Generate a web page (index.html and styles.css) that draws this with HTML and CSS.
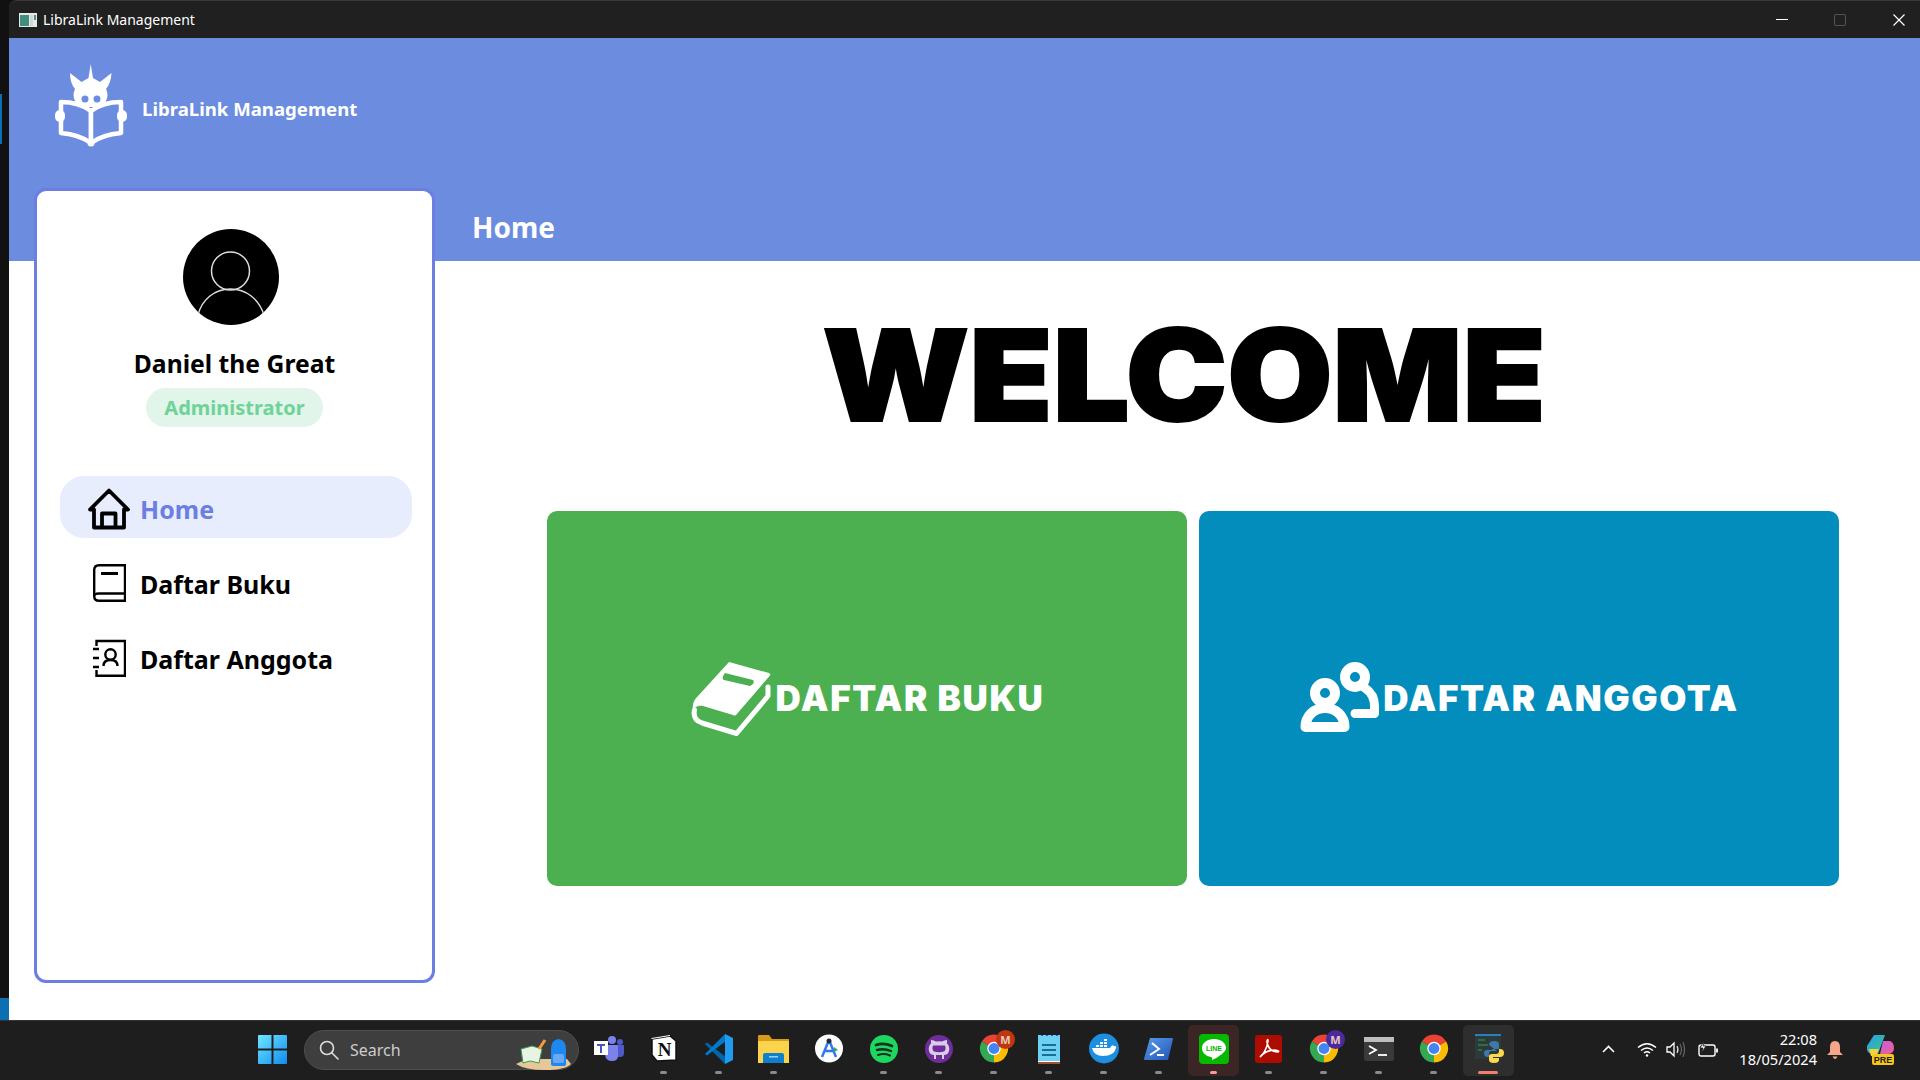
FILE: index.html
```html
<!DOCTYPE html>
<html lang="en">
<head>
<meta charset="utf-8">
<title>LibraLink Management</title>
<link rel="stylesheet" href="styles.css">
</head>
<body>
<div class="desktop">
  <div class="rail"><span class="rail-mark"></span><span class="rail-end"></span></div>
  <div class="window">
    <div class="titlebar">
      <svg class="app-icon" width="18" height="14" viewBox="0 0 18 14"><rect width="18" height="14" fill="#e8e8e8"/><rect x="1" y="2" width="9" height="11" fill="#3f8f7c"/><rect x="11" y="2" width="3" height="11" fill="#cfd8d8"/><rect x="15" y="2" width="2" height="5" fill="#4d8f80"/></svg>
      <span class="title-text">LibraLink Management</span>
      <div class="win-controls">
        <span class="win-min"></span>
        <span class="win-max"></span>
        <svg width="12" height="12" viewBox="0 0 12 12"><path d="M.5.5l11 11M11.5.5l-11 11" stroke="#fff" stroke-width="1.2"/></svg>
      </div>
    </div>
    <div class="app">
      <div class="banner"></div>
      <div class="brand">
        <svg class="logo" width="72" height="84" viewBox="0 0 72 84">
          <g fill="#6c8cdf" stroke="#fff" stroke-width="4.500" stroke-linejoin="round">
            <path d="M6 39C17 39 28 42 36 48V80C28 74 17 71 6 70Z"/>
            <path d="M66 39C55 39 44 42 36 48V80C44 74 55 71 66 70Z"/>
          </g>
          <path fill="#fff" d="M35.700 1L38 15L45 19L56.500 10Q56 20 51 26Q54 32 51 38L47 44H24.500L20 38Q17 32 20 26Q15 20 15 10L26.500 19L33.500 15Z"/>
          <circle cx="30" cy="36" r="3.500" fill="#6c8cdf"/><circle cx="42" cy="36" r="3.500" fill="#6c8cdf"/>
          <rect x="0" y="47" width="10" height="12" rx="5" fill="#fff"/><rect x="62" y="47" width="10" height="12" rx="5" fill="#fff"/>
          <circle cx="36" cy="80" r="3.500" fill="#fff"/>
        </svg>
        <span class="brand-name">LibraLink Management</span>
      </div>
      <aside class="sidebar">
        <svg class="avatar" width="96" height="96" viewBox="0 0 96 96">
          <defs><clipPath id="avclip"><circle cx="48" cy="48" r="48"/></clipPath></defs>
          <circle cx="48" cy="48" r="48"/>
          <circle cx="47.500" cy="42" r="19" fill="none" stroke="#ddd" stroke-width="1.500"/>
          <path clip-path="url(#avclip)" d="M15 86C19 70 32 60 47.500 60S76 70 81 86" fill="none" stroke="#ddd" stroke-width="1.500"/>
        </svg>
        <div class="user-name">Daniel the Great</div>
        <div class="role">Administrator</div>
        <nav class="nav">
          <a class="nav-item nav-active">
            <span class="nav-icon"><svg width="42" height="42" viewBox="0 0 42 42" fill="none" stroke="#000" stroke-width="3.800" stroke-linejoin="round"><path d="M2 21.500L21 2.500L40 21.500H36V39.500H6V21.500Z"/><path d="M14 39V25.500H27.500V39"/></svg></span>
            <span>Home</span>
          </a>
          <a class="nav-item">
            <span class="nav-icon"><svg width="33" height="38" viewBox="0 0 33 38" fill="none" stroke="#000" stroke-width="2.400"><path d="M32 1.200H6Q1.200 1.200 1.200 6V32Q1.200 36.800 6 36.800H32Z"/><path d="M1.200 32Q1.200 29.500 6 29.500H32"/><path d="M8 9.500H25" stroke-width="3"/></svg></span>
            <span>Daftar Buku</span>
          </a>
          <a class="nav-item">
            <span class="nav-icon"><svg width="33" height="38" viewBox="0 0 33 38" fill="none" stroke="#000" stroke-width="2.400"><path d="M3.500 7V2H32V36.800H3.500V31"/><path d="M0 10H6M0 19H6M0 28H6" stroke-width="2.600"/><circle cx="17.500" cy="15.500" r="5.200"/><path d="M10.500 27C10.500 23 13.500 21 17.500 21S24.500 23 24.500 27"/></svg></span>
            <span>Daftar Anggota</span>
          </a>
        </nav>
      </aside>
      <div class="page-title">Home</div>
      <main class="main">
        <h1 class="welcome"><span class="welcome-text">WELCOME</span></h1>
        <div class="cards">
          <a class="card card-green">
            <svg width="84" height="78" viewBox="0 0 84 78">
              <path fill="#fff" d="M39 2L79 13Q81 14 80 15.500L46 55Q45 56 43 55L13 46C8 45 4 47 3 52C2 44 4 40 8 36Z"/>
              <path fill="none" stroke="#fff" stroke-width="5" stroke-linecap="round" stroke-linejoin="round" d="M4.500 50C3 57 6 61 12 63L46.500 73.500L78 36V27"/>
              <path fill="#4cb050" d="M35 13L63 20Q64.500 21 63 24L60 26L34 20Q32 19 33 16Z"/>
            </svg>
            <span class="card-text">DAFTAR BUKU</span>
          </a>
          <a class="card card-blue">
            <svg width="82" height="75" viewBox="0 0 82 75" fill="none" stroke="#fff" stroke-linejoin="round" stroke-linecap="round">
              <circle cx="26" cy="32" r="10" stroke-width="10"/>
              <path stroke-width="10" d="M6.500 66C6.500 55 15 47 26 47S45.500 55 45.500 66Z"/>
              <circle cx="56" cy="16" r="10" stroke-width="10"/>
              <path stroke-width="9" d="M66 27C72 31 75.500 38 75.500 45V52.500H56"/>
            </svg>
            <span class="card-text">DAFTAR ANGGOTA</span>
          </a>
        </div>
      </main>
    </div>
  </div>
</div>
<footer class="taskbar">
  <span class="start">
    <svg width="29" height="29" viewBox="0 0 29 29"><defs><linearGradient id="win" x1="0" y1="0" x2="1" y2="1"><stop offset="0" stop-color="#6fe6ff"/><stop offset="1" stop-color="#0f8cf0"/></linearGradient></defs><path fill="url(#win)" d="M0 1a1 1 0 0 1 1-1H13.500V13.500H0ZM15.500 0H28a1 1 0 0 1 1 1V13.500H15.500ZM0 15.500H13.500V29H1a1 1 0 0 1-1-1ZM15.500 15.500H29V28a1 1 0 0 1-1 1H15.500Z"/></svg>
  </span>
  <div class="search">
    <svg width="20" height="20" viewBox="0 0 20 20" fill="none" stroke="#ddd" stroke-width="1.600"><circle cx="8" cy="8" r="6.500"/><path d="M13 13l6 6" stroke-linecap="round"/></svg>
    <span class="search-text">Search</span>
    <svg class="search-art" width="56" height="34" viewBox="0 0 56 34"><path fill="#e5c79a" d="M1 27L12 22H52L56 27Q50 33 30 33T1 27Z"/><path fill="#e9f3e4" stroke="#3f9a4f" d="M6 12L17 9L27 12L24 26L15 24L8 26Z"/><path d="M24 12L30 3" stroke="#f29a3c" stroke-width="3"/><path fill="#1e88f0" d="M36 12Q36 3 43.500 2Q51 3 51 12V27Q51 29 48 29H39Q36 29 36 27Z"/><rect x="38" y="17" width="11" height="9" rx="2" fill="#6aa8f8"/></svg>
  </div>
  <div class="task-icons">
    <span class="tb"><svg width="30" height="27" viewBox="0 0 30 27"><circle cx="18" cy="5" r="4" fill="#7b83eb"/><circle cx="26" cy="7" r="3" fill="#5059c9"/><path fill="#5059c9" d="M21 10H30V18Q30 22 26 22H21Z"/><path fill="#7b83eb" d="M11 10H24V21Q24 26 18 26Q12 26 11 20Z"/><rect y="6" width="14" height="14" fill="#fff"/><path fill="#4b53bc" d="M3 9H11V11H8V18H6V11H3Z"/></svg></span>
    <span class="tb tb-on"><svg width="26" height="27" viewBox="0 0 26 27"><path fill="#fff" stroke="#111" stroke-width="1.500" d="M1 4L19 1L25 6V25L6 26L1 20Z"/><path fill="none" stroke="#fff" d="M.5 3.500L19 .5"/><text x="13.500" y="21" class="notion-n">N</text></svg></span>
    <span class="tb tb-on"><svg width="30" height="32" viewBox="0 0 30 32"><path fill="#0065a9" d="M1 11L3 9.500L22 24V28L21 31Z"/><path fill="#007acc" d="M1 21L3 22.500L22 8V4L21 1Z"/><path fill="#1f9cf0" d="M21 1L29 5V27L21 31Z"/></svg></span>
    <span class="tb tb-on"><svg width="31" height="30" viewBox="0 0 31 30"><path fill="#d99a1c" d="M0 2Q0 1 1 1H11L14 5H31V12H0Z"/><path fill="#fcd34d" d="M0 7H31V29H0Z"/><path fill="#0f7fd0" d="M5 21Q5 19 7 19H24Q26 19 26 21V29H5Z"/><rect x="11" y="22" width="9" height="1.500" fill="#9ed0f5"/></svg></span>
    <span class="tb"><svg width="30" height="31" viewBox="0 0 30 31"><circle cx="15" cy="15.500" r="14" fill="#fff"/><path fill="none" stroke="#2f78ef" stroke-width="2.500" d="M15 7L8 24M15 7L22 24M10 18H20"/><circle cx="15" cy="8" r="2.500" fill="#1f2a44"/><path d="M20 14l4 3-4 2z" fill="#3ba55c"/></svg></span>
    <span class="tb tb-on"><svg width="28" height="30" viewBox="0 0 28 30"><circle cx="14" cy="15" r="14" fill="#1ed760"/><g fill="none" stroke="#14301e" stroke-linecap="round"><path stroke-width="2.800" d="M6 11Q14 8.500 22 12"/><path stroke-width="2.400" d="M7 16Q14 14 21 17"/><path stroke-width="2" d="M8 21Q14 19 20 21.500"/></g></svg></span>
    <span class="tb tb-on"><svg width="28" height="30" viewBox="0 0 28 30"><circle cx="14" cy="15" r="14" fill="#6e2d9a"/><path fill="#d9cde6" d="M9 25V21Q5 21 4 17Q3 12 6 9.500V6Q9 6 11 7.500Q14 7 17 7.500Q19 6 22 6V9.500Q25 12 24 17Q23 21 19 21V25H17V21Q14 21 11 21V25Z"/><path fill="#6e2d9a" d="M8 11.500H20Q21.500 15 19 17.500Q14 19 9 17.500Q6.500 15 8 11.500Z"/></svg></span>
    <span class="tb tb-on tb-badged"><svg width="30" height="31" viewBox="0 0 32 32"><path fill="#ea4335" d="M16 16L3 8.500A15 15 0 0 1 29 8.500Z"/><path fill="#fbbc04" d="M16 16L29 8.500A15 15 0 0 1 16 31Z"/><path fill="#34a853" d="M16 16L16 31A15 15 0 0 1 3 8.500Z"/><circle cx="16" cy="16" r="7.200" fill="#fff"/><circle cx="16" cy="16" r="5.800" fill="#4285f4"/></svg><svg class="badge" width="19" height="19" viewBox="0 0 19 19"><circle cx="9.500" cy="9.500" r="9.500" fill="#c0360f"/><text x="9.500" y="13.500" class="badge-m">M</text></svg></span>
    <span class="tb tb-on"><svg width="22" height="32" viewBox="0 0 22 32"><path fill="#6dd0f4" d="M0 2H22V28H0Z"/><path fill="#a4532a" d="M0 28H22V31H0Z"/><path fill="#fff" d="M0 28H22V29H0Z"/><path fill="#17708f" d="M4 11H18V13H4ZM4 16H18V18H4ZM4 21H18V23H4Z"/><path fill="#117" d="M3 1h2v2H3zM8 1h2v2H8zM13 1h2v2h-2zM18 1h2v2h-2z" opacity=".6"/></svg></span>
    <span class="tb tb-on"><svg width="30" height="31" viewBox="0 0 30 31"><circle cx="15" cy="15.500" r="15" fill="#1d8fe1"/><path fill="#fff" d="M3 15H21Q23 11 25 13Q28 13 27 15Q25 23 14 23Q5 23 3 15Z"/><path fill="#fff" d="M7 12h3v2H7zM11 12h3v2h-3zM15 12h3v2h-3zM11 9h3v2h-3zM15 9h3v2h-3zM15 6h3v2h-3z"/></svg></span>
    <span class="tb tb-on"><svg width="29" height="24" viewBox="0 0 29 24"><defs><linearGradient id="ps" x1="0" y1="0" x2="1" y2="1"><stop offset="0" stop-color="#5b9bea"/><stop offset="1" stop-color="#1f55b8"/></linearGradient></defs><path fill="url(#ps)" d="M6 1H28Q29 1 29 2L24 23H1Q0 23 0 22Z"/><path d="M8 6L15 12L6 18" fill="none" stroke="#fff" stroke-width="2"/><path d="M13 18H20" stroke="#fff" stroke-width="2"/></svg></span>
    <span class="tb tb-on tb-tile tb-line"><svg width="30" height="30" viewBox="0 0 30 30"><rect width="30" height="30" rx="4" fill="#06b900"/><path fill="#fff" d="M15 5C8 5 3 9 3 14C3 19 7 22 12 23C13 23 13 25 13 26C14 26 21 22 24 19C26 17 27 16 27 14C27 9 22 5 15 5Z"/><text x="15" y="17" class="line-t">LINE</text></svg></span>
    <span class="tb tb-on"><svg width="27" height="28" viewBox="0 0 27 28"><rect width="27" height="28" rx="3" fill="#ae0c00"/><path fill="none" stroke="#fff" stroke-width="1.600" d="M5 22C8 20 12 14 13 6C13 4 12 4 12 7C13 13 17 17 23 17C25 16 22 15 19 15C14 15 8 18 5 22Z"/></svg></span>
    <span class="tb tb-on tb-badged"><svg width="30" height="31" viewBox="0 0 32 32"><path fill="#ea4335" d="M16 16L3 8.500A15 15 0 0 1 29 8.500Z"/><path fill="#fbbc04" d="M16 16L29 8.500A15 15 0 0 1 16 31Z"/><path fill="#34a853" d="M16 16L16 31A15 15 0 0 1 3 8.500Z"/><circle cx="16" cy="16" r="7.200" fill="#fff"/><circle cx="16" cy="16" r="5.800" fill="#4285f4"/></svg><svg class="badge" width="19" height="19" viewBox="0 0 19 19"><circle cx="9.500" cy="9.500" r="9.500" fill="#4b2a9e"/><text x="9.500" y="13.500" class="badge-m">M</text></svg></span>
    <span class="tb tb-on"><svg width="30" height="24" viewBox="0 0 30 24"><rect width="30" height="24" rx="2" fill="#3a3a3a"/><rect width="30" height="5" fill="#bdbdbd"/><path d="M5 9L12 13L5 17" fill="none" stroke="#fff" stroke-width="1.800"/><path d="M14 18H23" stroke="#fff" stroke-width="1.800"/></svg></span>
    <span class="tb tb-on"><svg width="30" height="31" viewBox="0 0 32 32"><path fill="#ea4335" d="M16 16L3 8.500A15 15 0 0 1 29 8.500Z"/><path fill="#fbbc04" d="M16 16L29 8.500A15 15 0 0 1 16 31Z"/><path fill="#34a853" d="M16 16L16 31A15 15 0 0 1 3 8.500Z"/><circle cx="16" cy="16" r="7.200" fill="#fff"/><circle cx="16" cy="16" r="5.800" fill="#4285f4"/></svg></span>
    <span class="tb tb-on tb-tile tb-py"><svg width="30" height="32" viewBox="0 0 30 32"><rect x="1" y="2" width="26" height="24" fill="#2b3a3a"/><rect x="1" y="1" width="26" height="2" fill="#2a7fc0"/><path d="M4 7H11M4 12H14M4 17H8" stroke="#3f9a4f" stroke-width="1"/><path fill="#3f78a8" d="M15 12Q15 8 20 8Q25 8 25 11V16H18V17H13Q10 17 10 20Q10 24 14 24H15V20Q15 18 18 18H23Z"/><path fill="#fcd94a" d="M25 16H26Q30 16 30 20Q30 24 26 24H19V25H25V27Q25 30 20 30Q15 30 15 27V23Q15 21 18 21H22Q25 21 25 18Z"/></svg></span>
  </div>
  <div class="tray">
    <svg class="t-chev" width="13" height="8" viewBox="0 0 13 8"><path d="M1 7L6.500 1.500L12 7" fill="none" stroke="#fff" stroke-width="1.600"/></svg>
    <svg class="t-wifi" width="20" height="15" viewBox="0 0 20 15" fill="none" stroke="#fff" stroke-width="1.500"><path d="M1 5.500Q10-2 19 5.500M4 8.500Q10 3.500 16 8.500M7 11Q10 8.500 13 11"/><circle cx="10" cy="13.500" r="1.200" fill="#fff" stroke="none"/></svg>
    <svg class="t-vol" width="20" height="17" viewBox="0 0 20 17" fill="none"><path d="M1 6H4L8 2V15L4 11H1Z" stroke="#fff" stroke-width="1.300"/><path d="M11 5Q13 8.500 11 12" stroke="#ddd" stroke-width="1.200"/><path d="M14 3Q17 8.500 14 14M17 1Q20 8.500 17 16" stroke="#666" stroke-width="1.200"/></svg>
    <svg class="t-bat" width="20" height="16" viewBox="0 0 20 16" fill="none" stroke="#fff" stroke-width="1.400"><rect x="1" y="4" width="16" height="11" rx="2"/><path d="M19 7.500V11.500" stroke-width="1.800"/><path d="M6 0L2 7H5L3.500 12L8 5H5Z" fill="#fff" stroke="#1e1e1e" stroke-width=".8"/></svg>
    <div class="clock"><span>22:08</span><span>18/05/2024</span></div>
    <svg class="t-bell" width="16" height="19" viewBox="0 0 16 19"><path fill="#f7a68a" d="M8 1Q13 1 13 7V12L16 15H0L3 12V7Q3 1 8 1Z"/><path fill="#f7a68a" d="M5.500 16.500H10.500Q9 19 8 19T5.500 16.500Z"/></svg>
    <svg class="t-copilot" width="28" height="31" viewBox="0 0 28 31"><defs><linearGradient id="cp1" x1="0" y1="0" x2="1" y2="1"><stop offset="0" stop-color="#2b9ce8"/><stop offset="1" stop-color="#36c98e"/></linearGradient><linearGradient id="cp2" x1="0" y1="0" x2="1" y2="1"><stop offset="0" stop-color="#c65fd8"/><stop offset="1" stop-color="#f0609a"/></linearGradient></defs><path fill="url(#cp1)" d="M8 1H19L12 20H7Q0 20 1 12Z"/><path fill="#f6d040" d="M3 15H13L10 22H5Z"/><path fill="url(#cp2)" d="M17 7H24Q28 8 28 15Q27 20 22 20H14Z"/><rect x="6" y="20" width="22" height="11" rx="2" fill="#f5c518"/><text x="17" y="29" class="pre">PRE</text></svg>
  </div>
</footer>
</body>
</html>
```
FILE: styles.css
```css
* { box-sizing: border-box; }
html, body { margin: 0; height: 100%; }
body {
  width: 1920px;
  height: 1080px;
  overflow: hidden;
  display: flex;
  flex-direction: column;
  font-family: "Noto Sans", "Liberation Sans", sans-serif;
  background: #111;
  color: #000;
}
.desktop { flex: 1; display: flex; min-height: 0; }
.rail {
  width: 9px;
  background: #111;
  display: flex;
  flex-direction: column;
  justify-content: space-between;
  padding-top: 94px;
}
.rail-mark { display: block; width: 2px; height: 50px; background: #0c6fb4; }
.rail-end { display: block; height: 22px; background: #0c6fb4; }
.window { flex: 1; display: flex; flex-direction: column; min-width: 0; }
.titlebar {
  height: 38px;
  background: #202020;
  border-top: 1px solid #3a3a3a;
  border-top-left-radius: 8px;
  display: flex;
  align-items: center;
  padding-left: 10px;
  color: #fff;
}
.app-icon { margin-right: 6px; }
.title-text { font-size: 14px; }
.win-controls { margin-left: auto; display: flex; align-items: center; padding-right: 15px; }
.win-min { width: 12px; height: 1px; background: #fff; margin-right: 46px; margin-top: -1px; }
.win-max { width: 12px; height: 12px; border: 1px solid #555; border-radius: 2px; margin-right: 47px; }

.app {
  flex: 1;
  display: grid;
  grid-template-columns: 25px 401px 1fr;
  grid-template-rows: 150px 73px 1fr;
  background: #fff;
  min-height: 0;
}
.banner { grid-area: 1 / 1 / 3 / -1; background: #6c8cdf; }
.brand {
  grid-area: 1 / 1 / 2 / -1;
  display: flex;
  align-items: flex-start;
  padding: 25px 0 0 46px;
  color: #fff;
}
.brand-name { font-size: 18.6px; font-weight: 700; margin: 33px 0 0 15px; }
.sidebar {
  grid-area: 2 / 2 / 4 / 3;
  z-index: 1;
  margin-bottom: 37px;
  background: #fff;
  border: 3px solid #6c7ee1;
  border-radius: 12px;
  display: flex;
  flex-direction: column;
  align-items: center;
  padding-top: 38px;
}
.avatar { display: block; margin-left: -8px; }
.user-name { font-size: 24.7px; font-weight: 700; margin-top: 22px; line-height: 33px; }
.role {
  margin-top: 8px;
  height: 39px;
  padding: 0 18px;
  border-radius: 20px;
  background: #e1f5ea;
  color: #6fd398;
  font-size: 20px;
  font-weight: 700;
  display: flex;
  align-items: center;
}
.nav { align-self: stretch; margin: 49px 20px 0 23px; display: flex; flex-direction: column; }
.nav-item {
  height: 62px;
  margin-bottom: 13px;
  border-radius: 24px;
  display: flex;
  align-items: center;
  font-size: 25px;
  font-weight: 700;
  padding-left: 80px;
  position: relative;
}
.nav-item span:last-child { margin-top: 4px; }
.nav-active { background: #e8edfe; color: #6c7ee1; }
.nav-icon { position: absolute; left: 28px; top: 12px; line-height: 0; }
.nav-item:not(.nav-active) .nav-icon { left: 33px; top: 13px; }
.page-title {
  grid-area: 2 / 3 / 3 / 4;
  color: #fff;
  font-size: 28px;
  font-weight: 700;
  padding: 20px 0 0 37px;
}
.main { grid-area: 3 / 3 / 4 / 4; padding: 0 81px 0 112px; display: flex; flex-direction: column; }
.welcome {
  margin: 51px 18px 0 0;
  height: 199px;
  text-align: center;
  font-family: Inter, "Liberation Sans", sans-serif;
  font-weight: 900;
  font-size: 127px;
  line-height: 127px;
}
.welcome-text { display: inline-block; transform: scaleX(1.07); -webkit-text-stroke: 2px #000; }
.cards { display: grid; grid-template-columns: 640px 640px; gap: 12px; }
.card {
  height: 375px;
  border-radius: 10px;
  display: flex;
  align-items: center;
  justify-content: center;
  color: #fff;
}
.card-green { background: #4cb050; }
.card-blue { background: #028dbc; }
.card-text {
  font-family: Inter, "Liberation Sans", sans-serif;
  font-weight: 900;
  font-size: 35px;
  letter-spacing: 1.6px;
  margin: -2px 0 0 2px;
}

.taskbar {
  height: 60px;
  flex: none;
  background: #1e1e1e;
  border-top: 1px solid #333;
  display: flex;
  align-items: center;
  color: #fff;
  padding-left: 245px;
}
.start { width: 55px; display: flex; justify-content: center; margin-top: -2px; }
.search {
  width: 275px;
  height: 40px;
  margin: -2px 2px 0 4px;
  border-radius: 20px;
  background: #3e3e3e;
  border: 1px solid #4e4e4e;
  display: flex;
  align-items: center;
  padding-left: 14px;
  position: relative;
}
.search-text { font-size: 16px; color: #ccc; margin-left: 11px; }
.search-art { position: absolute; right: 7px; top: 6px; }
.task-icons { display: flex; height: 59px; }
.tb {
  width: 55px;
  display: flex;
  align-items: center;
  justify-content: center;
  position: relative;
  padding-bottom: 4px;
}
.tb-on::after {
  content: "";
  position: absolute;
  bottom: 6px;
  left: 24px;
  width: 7px;
  height: 3px;
  border-radius: 2px;
  background: #8a8a8a;
}
.tb-tile::before {
  content: "";
  position: absolute;
  left: 2px;
  right: 2px;
  top: 4px;
  bottom: 4px;
  border-radius: 5px;
}
.tb svg { position: relative; }
.tb-line::before { background: #3c2525; }
.tb-line::after { background: #f79aa0; }
.tb-py::before { background: #2e2e2e; }
.tb-py::after { left: 17px; width: 20px; background: #f0806c; }
.badge { position: absolute !important; left: 30px; top: 9px; }
.badge-m { font: 700 11px "Noto Sans", sans-serif; fill: #e8c8c0; text-anchor: middle; }
.notion-n { font: 700 19px "Liberation Serif", serif; fill: #111; text-anchor: middle; }
.line-t { font: 700 7px "Liberation Sans", sans-serif; fill: #06b900; text-anchor: middle; }
.pre { font: 700 9px "Liberation Sans", sans-serif; fill: #222; text-anchor: middle; }
.tray { display: flex; align-items: center; height: 59px; margin-left: 86px; }
.tray svg { margin-top: -3px; }
.t-chev { margin-right: 22px; }
.t-wifi { margin-right: 9px; }
.t-vol { margin-right: 12px; }
.t-bat { margin-right: 12px; }
.clock {
  width: 87px;
  font-size: 14.6px;
  line-height: 20px;
  text-align: right;
  display: flex;
  flex-direction: column;
  margin-top: -4px;
}
.t-bell { margin-left: 10px; margin-right: 23px; }
```
